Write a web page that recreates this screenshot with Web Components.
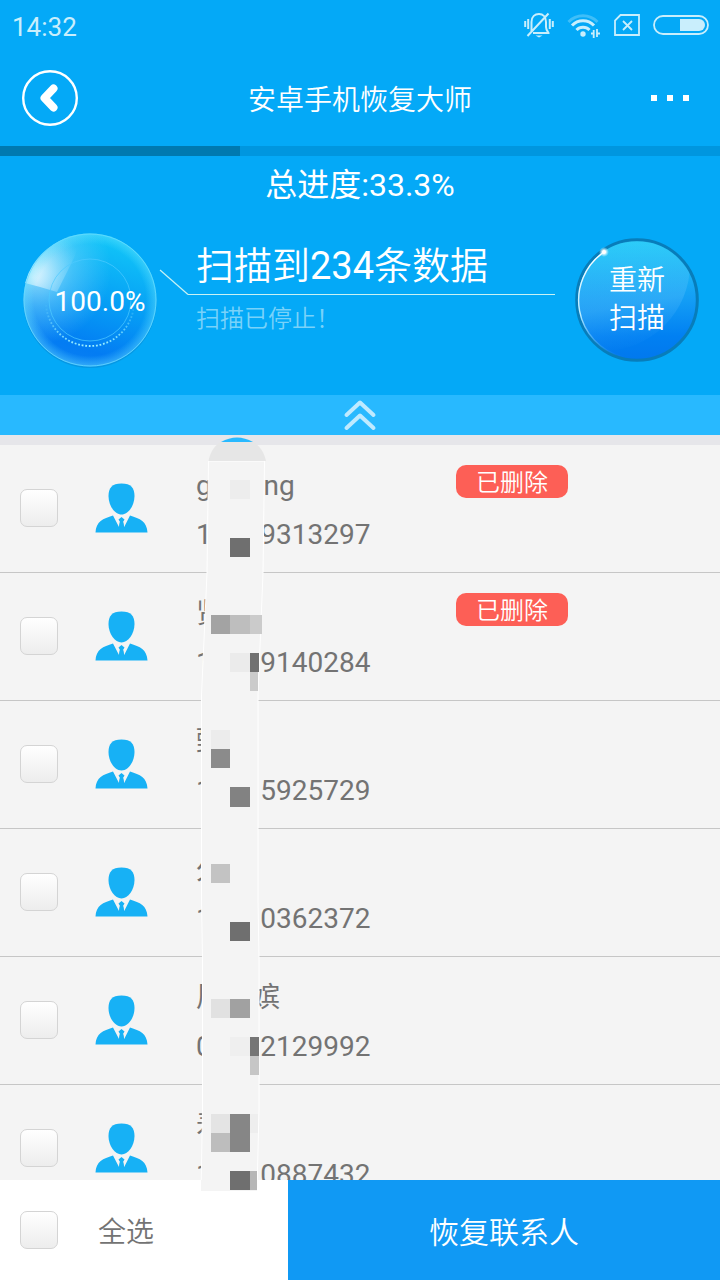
<!DOCTYPE html>
<html lang="zh-CN">
<head>
<meta charset="utf-8">
<meta name="viewport" content="width=device-width, initial-scale=1">
<title>安卓手机恢复大师</title>
<style>
  body {
    margin: 0;
    background: #f4f4f4;
    color: #737373;
    font-family: Roboto, "Noto Sans CJK SC", sans-serif;
    font-size: 28px;
  }
</style>
</head>
<body>
<recovery-app>
  <status-bar slot="top" time="14:32"></status-bar>
  <title-bar slot="top">安卓手机恢复大师</title-bar>
  <scan-panel slot="top" total="33.3" current="100.0">
    扫描到<b>234</b>条数据
    <span slot="state">扫描已停止！</span>
  </scan-panel>
  <contact-row name="g　   &#8202;ng" phone="1       9313297" deleted></contact-row>
  <contact-row name="贤" phone="1       9140284" deleted></contact-row>
  <contact-row name="甄" phone="1       5925729"></contact-row>
  <contact-row name="久" phone="1       0362372"></contact-row>
  <contact-row name="周　嫔" phone="0       2129992"></contact-row>
  <contact-row name="寿" phone="1       0887432"></contact-row>
  <privacy-mask slot="cover"></privacy-mask>
  <action-bar slot="bottom">恢复联系人</action-bar>
</recovery-app>

<script>
const checkboxStyles = /* css */`
  input[type="checkbox"] {
    appearance: none;
    flex: none;
    box-sizing: border-box;
    width: 38px;
    height: 38px;
    margin: 0;
    border: 1px solid #d4d4d4;
    border-radius: 7px;
    background: linear-gradient(#fff, #ededed);
  }

  input[type="checkbox"]:checked {
    background: #1099f4;
  }
`;

/** Attaches an open shadow root with the given markup. */
class BaseElement extends HTMLElement {
  constructor() {
    super();

    const template = document.createElement('template');
    template.innerHTML = this.constructor.markup;
    this.attachShadow({ mode: 'open' });
    this.shadowRoot.appendChild(template.content.cloneNode(true));
  }

  setText(selector, value) {
    this.shadowRoot.querySelector(selector).textContent = value;
  }
}

class RecoveryApp extends BaseElement {
  static markup = /* html */`
    <style>
      :host {
        display: flex;
        flex-direction: column;
        height: 100vh;
      }

      header,
      footer {
        flex: none;
      }

      main {
        position: relative;
        flex: 1;
        min-height: 0;
        border-top: 10px solid #e6e6ea;
      }

      .list {
        height: 100%;
        overflow: hidden;
      }
    </style>

    <header><slot name="top"></slot></header>
    <main>
      <div class="list"><slot></slot></div>
      <slot name="cover"></slot>
    </main>
    <footer><slot name="bottom"></slot></footer>
  `;
}

class StatusBar extends BaseElement {
  static markup = /* html */`
    <style>
      :host {
        display: flex;
        align-items: center;
        justify-content: space-between;
        height: 50px;
        padding: 0 11px 0 12px;
        background: #04a9f7;
        color: #c9eefc;
        font-size: 26px;
      }

      time {
        line-height: 50px;
        padding-top: 4px;
      }

      .icons {
        display: flex;
        align-items: center;
        gap: 13px;
      }

      svg {
        display: block;
      }
    </style>

    <time></time>
    <div class="icons">
      <svg width="30" height="26" viewBox="0 0 30 26" fill="none" stroke="currentColor" stroke-width="2">
        <path d="M7.500 19V10C7.500 4.500 11 2 15 2s7 3 7 8v5c0 3 2.500 5.500 2.500 6H9M3.500 24 24.500 1.500"/>
        <path d="M1.200 9v6M4.200 7v10M28.800 9v6M25.800 7v10"/>
        <path d="M11.500 23.500h7L15 25.500z" fill="currentColor" stroke="none"/>
      </svg>
      <svg width="34" height="26" viewBox="0 0 34 26" fill="none" stroke="currentColor" stroke-width="3">
        <path d="M1.500 10a20 20 0 0 1 29 0" opacity=".3"/>
        <path d="M5 13.500a15 15 0 0 1 22 0M9.500 18a9 9 0 0 1 13 0"/>
        <circle cx="16" cy="22" r="2.700" fill="currentColor" stroke="none"/>
        <path d="M24 21.500h3M26.700 18v8M30 17v8M30 21.500h3" stroke-width="1.800"/>
      </svg>
      <svg width="26" height="22" viewBox="0 0 26 22" fill="none" stroke="currentColor" stroke-width="1.800">
        <path d="M6.500 1H25v20H1V6.500zM9 7l9 9M18 7l-9 9"/>
      </svg>
      <svg width="56" height="20" viewBox="0 0 56 20">
        <rect x="1" y="1" width="54" height="18" rx="9" fill="none" stroke="currentColor" stroke-width="1.800"/>
        <path d="M27 4h19a6 6 0 0 1 0 12H27z" fill="currentColor"/>
      </svg>
    </div>
  `;

  connectedCallback() {
    this.setText('time', this.getAttribute('time'));
  }
}

class TitleBar extends BaseElement {
  static markup = /* html */`
    <style>
      :host {
        display: grid;
        grid-template-columns: 56px 1fr 56px;
        align-items: center;
        height: 96px;
        padding: 0 22px;
        background: #04a9f7;
        color: #fff;
      }

      h1 {
        margin: 0;
        padding-top: 6px;
        font-size: 28px;
        font-weight: 350;
        line-height: 40px;
        text-align: center;
      }

      button {
        display: flex;
        align-items: center;
        justify-content: center;
        gap: 10px;
        width: 56px;
        height: 56px;
        padding: 0;
        border: 0;
        background: none;
        color: inherit;
      }

      i {
        width: 6px;
        height: 6px;
        background: currentColor;
      }
    </style>

    <button type="button" aria-label="返回">
      <svg width="56" height="56" viewBox="0 0 56 56" fill="none" stroke="currentColor">
        <circle cx="28" cy="28" r="26.800" stroke-width="2.400"/>
        <path d="M31.500 18.500 22.500 28l9 9.500" stroke-width="8" stroke-linecap="round" stroke-linejoin="round"/>
      </svg>
    </button>
    <h1><slot></slot></h1>
    <button type="button" aria-label="更多"><i></i><i></i><i></i></button>
  `;
}

class ScanPanel extends BaseElement {
  static markup = /* html */`
    <style>
      :host {
        display: block;
        background: #04a9f7;
        color: #fff;
      }

      .track {
        height: 10px;
        background: #0096df;
      }

      .bar {
        height: 100%;
        background: #0079b0;
      }

      .total {
        margin: 0;
        font-size: 32px;
        line-height: 58px;
        text-align: center;
      }

      .stats {
        display: flex;
        align-items: center;
        padding: 19px 21px 28px 23px;
      }

      .orb,
      .rescan {
        display: grid;
        flex: none;
        place-items: center;
      }

      .orb > *,
      .rescan > * {
        grid-area: 1 / 1;
      }

      svg {
        display: block;
        overflow: visible;
      }

      .orb output {
        padding: 4px 0 0 20px;
        line-height: 40px;
      }

      .result {
        display: grid;
        grid-template-columns: 28px 1fr;
        flex: 1;
        align-self: start;
        margin: 6px 20px 0 3px;
      }

      .link {
        align-self: end;
      }

      h2 {
        margin: 0;
        padding-left: 8px;
        border-bottom: 1px solid #c8f2f4;
        font-size: 38px;
        font-weight: 350;
        line-height: 55px;
      }

      ::slotted(b) {
        font-weight: 400;
      }

      .state {
        grid-column: 2;
        margin: 0;
        padding-left: 8px;
        color: #79d2f9;
        font-size: 24px;
        font-weight: 350;
        line-height: 48px;
      }

      .rescan {
        padding: 0;
        border: 0;
        background: none;
        color: inherit;
        font: inherit;
        font-weight: 350;
        line-height: 38px;
      }

      .collapse {
        display: flex;
        align-items: center;
        justify-content: center;
        width: 100%;
        height: 40px;
        padding: 0;
        border: 0;
        background: #28b9ff;
        color: #bfeaff;
      }
    </style>

    <div class="track"><div class="bar"></div></div>
    <p class="total"></p>
    <div class="stats">
      <div class="orb">
        <svg width="134" height="134" viewBox="0 0 134 134">
          <defs>
            <linearGradient id="body" x1=".65" y1="0" x2=".35" y2="1">
              <stop offset="0" stop-color="#12c8f8"/>
              <stop offset=".5" stop-color="#069df5"/>
              <stop offset=".85" stop-color="#037cf3"/>
              <stop offset="1" stop-color="#0a80f3"/>
            </linearGradient>
            <radialGradient id="rim">
              <stop offset=".84" stop-color="#5fe0ff" stop-opacity="0"/>
              <stop offset="1" stop-color="#6be2ff" stop-opacity=".45"/>
            </radialGradient>
            <radialGradient id="glow" gradientUnits="userSpaceOnUse" cx="12" cy="36" r="76">
              <stop offset="0" stop-color="#d8f7ff" stop-opacity=".75"/>
              <stop offset=".5" stop-color="#a4eaff" stop-opacity=".35"/>
              <stop offset="1" stop-color="#8fe4ff" stop-opacity="0"/>
            </radialGradient>
            <radialGradient id="shine" gradientUnits="userSpaceOnUse" cx="10" cy="44" r="52">
              <stop offset="0" stop-color="#fff" stop-opacity=".7"/>
              <stop offset=".5" stop-color="#e2f9ff" stop-opacity=".3"/>
              <stop offset="1" stop-color="#c4f2ff" stop-opacity="0"/>
            </radialGradient>
            <linearGradient id="dots" x1="0" y1="0" x2="0" y2="1">
              <stop offset=".5" stop-color="#7fe3ff" stop-opacity="0"/>
              <stop offset="1" stop-color="#9bf0ff"/>
            </linearGradient>
          </defs>
          <circle cx="67" cy="68.500" r="66.500" fill="#0687cf" opacity=".5"/>
          <circle cx="67" cy="67" r="66.500" fill="url(#body)"/>
          <circle cx="67" cy="67" r="66.500" fill="url(#glow)"/>
          <path d="M2 50A66.500 66.500 0 0 1 60 1L51 25L34 59Q18 54 2 50z" fill="url(#shine)"/>
          <circle cx="67" cy="67" r="66.500" fill="url(#rim)"/>
          <circle cx="67" cy="67" r="66" fill="none" stroke="#68dcff" stroke-opacity=".75"/>
          <circle cx="67" cy="67" r="41" fill="none" stroke="#4fcaff" stroke-opacity=".7"/>
          <circle cx="67" cy="69" r="44" fill="none" stroke="url(#dots)" stroke-width="1.800" stroke-dasharray="1.800 1.800"/>
        </svg>
        <output></output>
      </div>
      <div class="result">
        <svg class="link" width="28" height="25" viewBox="0 0 28 25" fill="none" stroke="#c8f2f4" stroke-width="1.200">
          <path d="M0 0 28 24.500"/>
        </svg>
        <h2><slot></slot></h2>
        <p class="state"><slot name="state"></slot></p>
      </div>
      <button class="rescan" type="button">
        <svg width="124" height="124" viewBox="0 0 124 124">
          <defs>
            <linearGradient id="face" x1="0" y1="0" x2="0" y2="1">
              <stop offset="0" stop-color="#20cbf8"/>
              <stop offset=".5" stop-color="#139df5"/>
              <stop offset=".8" stop-color="#0180f2"/>
              <stop offset="1" stop-color="#0178ee"/>
            </linearGradient>
            <linearGradient id="gloss" gradientUnits="userSpaceOnUse" x1="40" y1="0" x2="60" y2="112">
              <stop offset="0" stop-color="#5bd7fb" stop-opacity=".2"/>
              <stop offset=".6" stop-color="#65c4fc" stop-opacity=".3"/>
              <stop offset="1" stop-color="#4aacff" stop-opacity="0"/>
            </linearGradient>
            <linearGradient id="edge" x1="0" y1="0" x2="0" y2="1">
              <stop offset="0" stop-color="#fff"/>
              <stop offset=".6" stop-color="#b8ecff"/>
              <stop offset="1" stop-color="#57baff" stop-opacity="0"/>
            </linearGradient>
            <radialGradient id="spark">
              <stop offset=".3" stop-color="#fff"/>
              <stop offset="1" stop-color="#bff3ff" stop-opacity="0"/>
            </radialGradient>
            <clipPath id="disc"><circle cx="62" cy="62" r="59"/></clipPath>
          </defs>
          <circle cx="62" cy="62" r="60.300" fill="url(#face)" stroke="#087dba" stroke-width="3"/>
          <circle cx="28" cy="26" r="87" fill="url(#gloss)" clip-path="url(#disc)"/>
          <path d="M29 14A58.500 58.500 0 0 0 48 119" fill="none" stroke="url(#edge)" stroke-width="1.400"/>
          <circle cx="29" cy="14" r="5" fill="url(#spark)"/>
        </svg>
        <span>重新<br>扫描</span>
      </button>
    </div>
    <button class="collapse" type="button" aria-label="收起">
      <svg width="32" height="30" viewBox="0 0 32 30" fill="none" stroke="currentColor" stroke-width="4" stroke-linecap="round" stroke-linejoin="round">
        <path d="M2.500 15 16 2.500 29.500 15M2.500 28 16 15.500 29.500 28"/>
      </svg>
    </button>
  `;

  connectedCallback() {
    const total = this.getAttribute('total');

    this.setText('.total', `总进度:${total}%`);
    this.setText('output', `${this.getAttribute('current')}%`);
    this.shadowRoot.querySelector('.bar').style.width = `${total}%`;
  }
}

class ContactRow extends BaseElement {
  static markup = /* html */`
    <style>
      :host {
        display: block;
        border-bottom: 1px solid #c6c6c6;
      }

      label {
        display: flex;
        align-items: center;
        box-sizing: border-box;
        height: 127px;
        padding: 0 0 2px 20px;
      }

      ${checkboxStyles}

      svg {
        flex: none;
        margin: 0 48px 0 37px;
        color: #17b1f5;
      }

      .info {
        flex: 0 0 260px;
        padding-top: 4px;
        line-height: 49px;
        white-space: pre;
      }

      .info span {
        display: block;
      }

      .badge {
        align-self: flex-start;
        width: 112px;
        margin-top: 20px;
        padding-top: 4px;
        border-radius: 10px;
        background: #fd5f56;
        color: #fff;
        font-size: 24px;
        font-weight: 350;
        line-height: 29px;
        text-align: center;
      }

      :host(:not([deleted])) .badge {
        display: none;
      }
    </style>

    <label>
      <input type="checkbox">
      <svg width="53" height="50" viewBox="0 0 53 50" fill="currentColor">
        <path d="M26.500.500C36 .500 39.500 5 39.500 13 39.500 23 33 31.500 26.500 31.500S13.500 23 13.500 13C13.500 5 17 .500 26.500.500z"/>
        <path d="M18 32.500 24 44l1-5-1.500-2.500 3-2.500 3 2.500L28 39l1.200 5L35 32.500c10 3 17 6 17.500 17H.500C1 38.500 8 35.500 18 32.500z"/>
        <path d="M24.800 39h3.400l1 6-2.700 3-2.700-3z"/>
      </svg>
      <span class="info"><span class="name"></span><span class="phone"></span></span>
      <span class="badge">已删除</span>
    </label>
  `;

  connectedCallback() {
    this.setText('.name', this.getAttribute('name'));
    this.setText('.phone', this.getAttribute('phone'));
  }
}

/** Mosaic strip that covers the private part of the names and numbers. */
class PrivacyMask extends BaseElement {
  static markup = /* html */`
    <style>
      :host {
        position: absolute;
        top: -8px;
        left: 200px;
        z-index: 1;
        pointer-events: none;
      }

      svg {
        display: block;
      }
    </style>

    <svg width="68" height="755" viewBox="200 437 68 755" shape-rendering="crispEdges">
      <path d="M208.500 461 207 573 201.500 695V900L202.500 960V1110L201 1191H257L259 1110V960L258 900V695L263 573 264.500 461z" fill="#f4f4f4" stroke="#fff" shape-rendering="auto"/>
      <rect x="201" y="1180" width="56" height="11" fill="#f4f4f4"/>
      <path d="M208.500 461C211 446 223 437 237 437s26 9 29 24z" fill="#e6e6e6" shape-rendering="auto"/>
      <path d="M221 442q16-9 32 0z" fill="#28b9ff" shape-rendering="auto"/>
    </svg>
  `;

  /* x, y, width, height, colour */
  static blocks = [
    [230, 480, 20, 19, '#ededed'],
    [230, 538, 20, 19, '#6f6f6f'],
    [211, 615, 19, 19, '#a3a3a3'],
    [230, 615, 20, 19, '#bebebe'],
    [250, 615, 12, 19, '#cbcbcb'],
    [230, 653, 20, 19, '#ebebeb'],
    [250, 653, 9, 19, '#717171'],
    [250, 672, 8, 19, '#cbcbcb'],
    [211, 730, 19, 19, '#ececec'],
    [211, 749, 19, 19, '#8b8b8b'],
    [230, 787, 20, 20, '#828282'],
    [211, 864, 19, 19, '#c3c3c3'],
    [230, 922, 20, 19, '#6f6f6f'],
    [211, 999, 19, 19, '#e1e1e1'],
    [230, 999, 20, 19, '#a1a1a1'],
    [230, 1037, 20, 19, '#efefef'],
    [250, 1037, 9, 19, '#757575'],
    [250, 1056, 9, 19, '#c6c6c6'],
    [211, 1114, 19, 19, '#e4e4e4'],
    [211, 1133, 19, 19, '#bdbdbd'],
    [230, 1114, 20, 38, '#868686'],
    [250, 1114, 8, 19, '#eeeeee'],
    [230, 1171, 20, 19, '#6f6f6f'],
    [250, 1171, 7, 19, '#b6b6b6']
  ];

  connectedCallback() {
    const svg = this.shadowRoot.querySelector('svg');

    PrivacyMask.blocks.forEach(([x, y, width, height, fill]) => {
      const rect = document.createElementNS('http://www.w3.org/2000/svg', 'rect');
      Object.entries({ x, y, width, height, fill }).forEach(([key, value]) => rect.setAttribute(key, value));
      svg.appendChild(rect);
    });
  }
}

class ActionBar extends BaseElement {
  static markup = /* html */`
    <style>
      :host {
        display: grid;
        grid-template-columns: 2fr 3fr;
        height: 100px;
        background: #fff;
      }

      label {
        display: flex;
        align-items: center;
        gap: 40px;
        padding-left: 20px;
        font-weight: 350;
      }

      ${checkboxStyles}

      button {
        padding: 0;
        border: 0;
        background: #1099f4;
        color: #fff;
        font: inherit;
        font-size: 30px;
        font-weight: 350;
      }
    </style>

    <label><input type="checkbox">全选</label>
    <button type="button"><slot></slot></button>
  `;
}

customElements.define('status-bar', StatusBar);
customElements.define('title-bar', TitleBar);
customElements.define('scan-panel', ScanPanel);
customElements.define('contact-row', ContactRow);
customElements.define('privacy-mask', PrivacyMask);
customElements.define('action-bar', ActionBar);
customElements.define('recovery-app', RecoveryApp);
</script>
</body>
</html>
